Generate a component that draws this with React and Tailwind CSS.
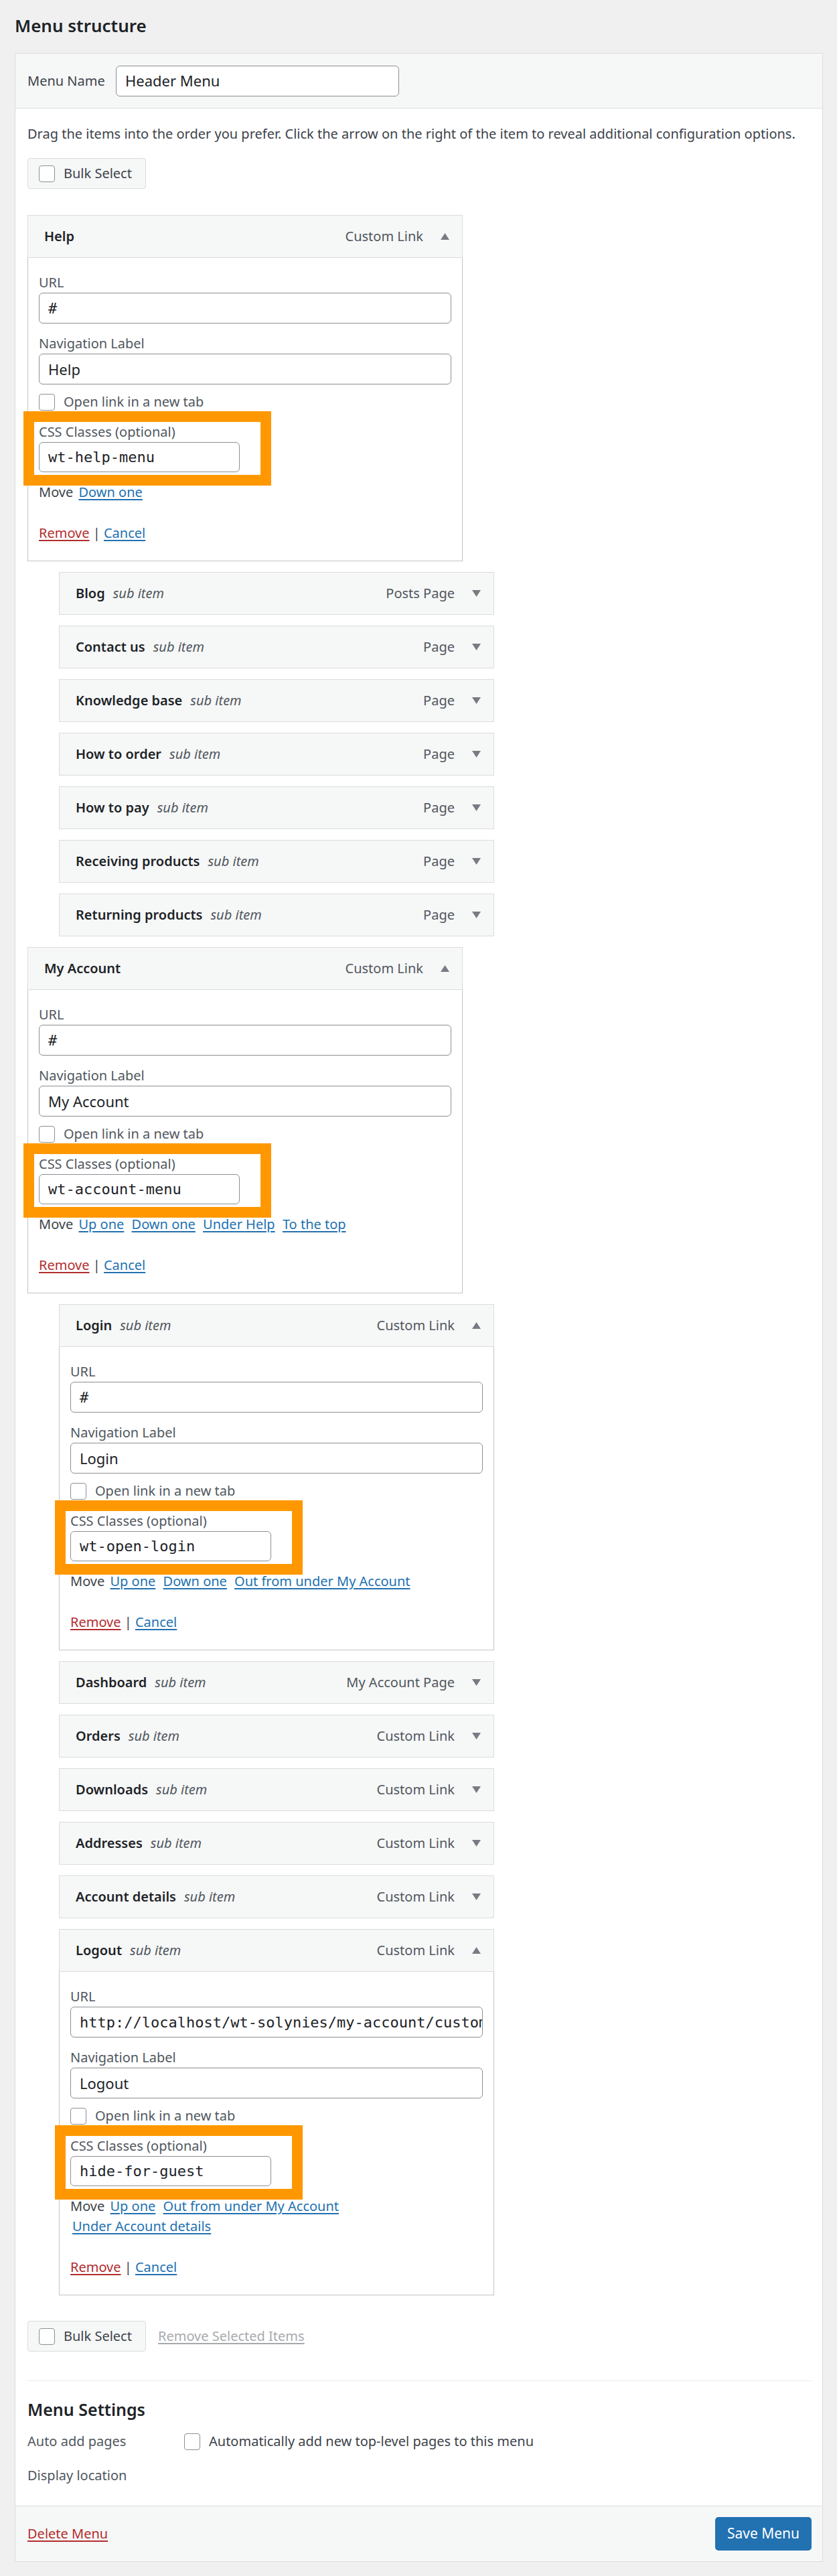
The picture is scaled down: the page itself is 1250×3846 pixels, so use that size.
import React from 'react';

const helpSubs = [
  { title: 'Blog', type: 'Posts Page' },
  { title: 'Contact us', type: 'Page' },
  { title: 'Knowledge base', type: 'Page' },
  { title: 'How to order', type: 'Page' },
  { title: 'How to pay', type: 'Page' },
  { title: 'Receiving products', type: 'Page' },
  { title: 'Returning products', type: 'Page' },
];

const accountSubs = [
  { title: 'Dashboard', type: 'My Account Page' },
  { title: 'Orders', type: 'Custom Link' },
  { title: 'Downloads', type: 'Custom Link' },
  { title: 'Addresses', type: 'Custom Link' },
  { title: 'Account details', type: 'Custom Link' },
];

function Arrow({ up }) {
  return (
    <svg width="13" height="10" viewBox="0 0 13 10" className="block">
      <polygon points={up ? '6.5,0 13,10 0,10' : '0,0 13,0 6.5,10'} fill="#787c82" />
    </svg>
  );
}

function Checkbox() {
  return <span className="inline-block h-[25px] w-[24px] shrink-0 rounded-[4px] border border-[#8c8f94] bg-white" />;
}

function ItemHeader({ title, sub, type, open }) {
  return (
    <div className="flex h-[64px] items-center justify-between border border-[#dcdcde] bg-[#f6f7f7] pl-[24px] pr-[19px]">
      <div className="leading-[26px]">
        <span className="font-semibold text-[#1d2327]">{title}</span>
        {sub && <span className="ml-[12px] italic text-[#50575e]">sub item</span>}
      </div>
      <div className="flex items-center gap-[26px] text-[#50575e]">
        <span>{type}</span>
        <Arrow up={open} />
      </div>
    </div>
  );
}

function Link({ children, red }) {
  return (
    <a className={`underline underline-offset-[3px] ${red ? 'text-[#b32d2e]' : 'text-[#2271b1]'}`}>{children}</a>
  );
}

function OpenItem({ title, sub, url, label, css, moves }) {
  return (
    <div className="w-[650px]">
      <ItemHeader title={title} sub={sub} type="Custom Link" open />
      <div className="border border-t-0 border-[#c3c4c7] bg-white px-[16px] pb-[28px] pt-[24px]">
        <div className="leading-[26px] text-[#50575e]">URL</div>
        <div className="mt-[2px] flex h-[46px] items-center overflow-hidden whitespace-nowrap rounded-[6px] border border-[#8c8f94] px-[13px] font-['DejaVu_Sans_Mono',monospace] text-[22px] text-[#1d2327]">
          {url}
        </div>
        <div className="mt-[17px] leading-[26px] text-[#50575e]">Navigation Label</div>
        <div className="mt-[2px] flex h-[46px] items-center rounded-[6px] border border-[#8c8f94] px-[13px] text-[22px] text-[#1d2327]">
          {label}
        </div>
        <div className="mt-[13px] flex h-[26px] items-center gap-[13px] text-[#50575e]">
          <Checkbox />
          <span>Open link in a new tab</span>
        </div>
        <div className="relative mt-[19px]">
          <div className="pointer-events-none absolute -bottom-[20px] -left-[23px] -top-[18px] w-[370px] border-[16px] border-[#ff9800]" />
          <div className="leading-[26px] text-[#50575e]">CSS Classes (optional)</div>
          <div className="mt-[2px] flex h-[45px] w-[300px] items-center rounded-[6px] border border-[#8c8f94] px-[13px] font-['DejaVu_Sans_Mono',monospace] text-[22px] text-[#1d2327]">
            {css}
          </div>
        </div>
        <div className="mt-[15px] leading-[30px] text-[#3c434a]">
          Move{' '}
          {moves.map((m) => (
            <React.Fragment key={m}>
              <span className="mx-[3px] inline-block whitespace-nowrap">
                <Link>{m}</Link>
              </span>{' '}
            </React.Fragment>
          ))}
        </div>
        <div className="mt-[33px] leading-[26px] text-[#3c434a]">
          <Link red>Remove</Link> | <Link>Cancel</Link>
        </div>
      </div>
    </div>
  );
}

function BulkSelect() {
  return (
    <div className="flex h-[46px] w-[177px] items-center gap-[13px] rounded-[4px] border border-[#dcdcde] bg-[#f6f7f7] pl-[16px] text-[#3c434a]">
      <Checkbox />
      <span>Bulk Select</span>
    </div>
  );
}

export default function App() {
  return (
    <div className="min-h-[3846px] bg-[#f0f0f1] pl-[22px] pr-[21px] pt-[22px] font-['Noto_Sans',Arial,sans-serif] text-[20px] text-[#3c434a]">
      <h2 className="text-[26px] font-semibold leading-[32px] text-[#1d2327]">Menu structure</h2>

      <div className="mt-[25px] border border-[#dcdcde] bg-white">
        <div className="flex h-[82px] items-center border-b border-[#dcdcde] bg-[#f6f7f7] px-[18px]">
          <span className="w-[132px] text-[#3c434a]">Menu Name</span>
          <div className="flex h-[46px] w-[423px] items-center rounded-[6px] border border-[#8c8f94] bg-white px-[13px] text-[22px] text-[#1d2327]">
            Header Menu
          </div>
        </div>

        <div className="pb-[32px] pl-[18px] pr-[16px] pt-[25px]">
          <p className="whitespace-nowrap leading-[26px]">
            Drag the items into the order you prefer. Click the arrow on the right of the item to reveal additional configuration options.
          </p>
          <div className="mt-[23px]">
            <BulkSelect />
          </div>

          <div className="mt-[39px] flex flex-col gap-[16px]">
            <OpenItem title="Help" url="#" label="Help" css="wt-help-menu" moves={['Down one']} />
            {helpSubs.map((s) => (
              <div key={s.title} className="ml-[47px] w-[650px]">
                <ItemHeader title={s.title} sub type={s.type} />
              </div>
            ))}
            <OpenItem
              title="My Account"
              url="#"
              label="My Account"
              css="wt-account-menu"
              moves={['Up one', 'Down one', 'Under Help', 'To the top']}
            />
            <div className="ml-[47px]">
              <OpenItem
                title="Login"
                sub
                url="#"
                label="Login"
                css="wt-open-login"
                moves={['Up one', 'Down one', 'Out from under My Account']}
              />
            </div>
            {accountSubs.map((s) => (
              <div key={s.title} className="ml-[47px] w-[650px]">
                <ItemHeader title={s.title} sub type={s.type} />
              </div>
            ))}
            <div className="ml-[47px]">
              <OpenItem
                title="Logout"
                sub
                url="http://localhost/wt-solynies/my-account/customer-logout/"
                label="Logout"
                css="hide-for-guest"
                moves={['Up one', 'Out from under My Account', 'Under Account details']}
              />
            </div>
          </div>

          <div className="mt-[38px] flex items-center gap-[18px]">
            <BulkSelect />
            <span className="text-[#a7aaad] underline underline-offset-[3px]">Remove Selected Items</span>
          </div>

          <div className="mt-[43px] border-t border-[#ececec]" />

          <h3 className="mt-[26px] text-[25px] font-semibold leading-[32px] text-[#1d2327]">Menu Settings</h3>
          <div className="mt-[19px] flex h-[26px] items-center text-[#50575e]">
            <span className="w-[234px]">Auto add pages</span>
            <Checkbox />
            <span className="ml-[13px] text-[#3c434a]">Automatically add new top-level pages to this menu</span>
          </div>
          <div className="mt-[25px] leading-[26px] text-[#50575e]">Display location</div>
        </div>

        <div className="flex h-[83px] items-center justify-between border-t border-[#dcdcde] bg-[#f6f7f7] pl-[18px] pr-[16px]">
          <Link red>Delete Menu</Link>
          <div className="flex h-[50px] w-[144px] items-center justify-center rounded-[5px] bg-[#2271b1] text-[21px] text-white">
            Save Menu
          </div>
        </div>
      </div>
    </div>
  );
}
